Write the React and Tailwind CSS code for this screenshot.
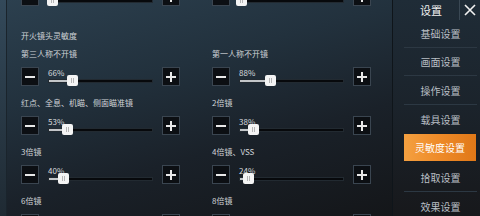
import React from "react";

const rows = [
  [
    { label: "第三人称不开镜", v: 66 },
    { label: "第一人称不开镜", v: 88 },
  ],
  [
    { label: "红点、全息、机瞄、侧面瞄准镜", v: 53 },
    { label: "2倍镜", v: 38 },
  ],
  [
    { label: "3倍镜", v: 40 },
    { label: "4倍镜、VSS", v: 24 },
  ],
  [
    { label: "6倍镜", v: 30 },
    { label: "8倍镜", v: 7 },
  ],
];

const menu = ["基础设置", "画面设置", "操作设置", "载具设置", "灵敏度设置", "拾取设置", "效果设置"];
const menuH = ["h-[28px]", "h-[28px]", "h-[29px]", "h-[29px]", "h-[29px]", "h-[29px]", "h-[29px]"];

function Btn({ plus }) {
  return (
    <div className="w-[18px] h-[19px] shrink-0 bg-[#0c0f13] border border-[#3a4550] flex items-center justify-center relative">
      <div className="w-[10px] h-[2px] bg-[#e8e8e8]" />
      {plus && <div className="absolute w-[2px] h-[10px] bg-[#e8e8e8]" />}
    </div>
  );
}

function Controls({ v, showText = true }) {
  const pos = (v / 300) * 105;
  return (
    <div className="flex h-[19px]">
      <Btn />
      <div className="ml-[9px] w-[105px] flex flex-col">
        <div className="h-[11px] text-[8px] leading-[11px] text-[#d8dbde]">{showText ? `${v}%` : ""}</div>
        <div className="relative mt-[1px] h-[4px] bg-[#07090c] border border-[#222a31]">
          <div className="absolute left-0 top-0 h-full bg-[#c3c6c9]" style={{ width: pos }} />
          <div
            className="absolute top-[-5px] w-[11px] h-[11px] rounded-[2px] bg-[#f4f4f4] flex items-center justify-center gap-[1px]"
            style={{ left: pos - 5.5 }}
          >
            <div className="w-px h-[5px] bg-[#b5b5b5]" />
            <div className="w-px h-[5px] bg-[#b5b5b5]" />
          </div>
        </div>
      </div>
      <div className="ml-[9px]">
        <Btn plus />
      </div>
    </div>
  );
}

function Cell({ label, v }) {
  return (
    <div className="flex flex-col">
      <div className="h-[12px] text-[8px] leading-[12px] text-[#d0d4d8] whitespace-nowrap">{label}</div>
      <div className="mt-[7px]">
        <Controls v={v} />
      </div>
    </div>
  );
}

export default function App() {
  return (
    <div
      className="w-[480px] h-[216px] overflow-hidden flex"
      style={{ fontFamily: '"Noto Sans CJK SC", "Noto Sans", sans-serif' }}
    >
      {/* main panel */}
      <div className="w-[392px] h-full flex bg-[linear-gradient(165deg,#2c404f_0%,#22313d_35%,#1a2129_65%,#141619_100%)]">
        <div className="w-[7px] h-full bg-[linear-gradient(180deg,#33495a,#1f2a33)] border-r border-[#1a242c]" />
        <div className="flex-1 flex flex-col pl-[14px]">
          <div className="-mt-[13px] grid grid-cols-[191px_1fr]">
            <Controls v={11} showText={false} />
            <Controls v={5} showText={false} />
          </div>
          <div className="mt-[19px] -ml-[14px] h-px bg-[#3a4b58]" />
          <div className="mt-[5px] h-[12px] text-[8px] leading-[12px] text-[#d0d4d8]">开火镜头灵敏度</div>
          <div className="mt-[6px] flex flex-col gap-[11px]">
            {rows.map((r, i) => (
              <div key={i} className="grid grid-cols-[191px_1fr]">
                <Cell {...r[0]} />
                <Cell {...r[1]} />
              </div>
            ))}
          </div>
        </div>
      </div>
      {/* sidebar */}
      <div className="w-[88px] h-full flex flex-col border-l border-[#0f151a] bg-[linear-gradient(180deg,#1f2c37_0%,#1b232b_50%,#17181b_100%)]">
        <div className="h-[21px] flex">
          <div className="flex-1 flex items-center justify-center pl-[10px] text-[11px] text-[#f0f0f0]">设置</div>
          <div className="w-[21px] h-[20px] border-l border-[#3a4854] flex items-center justify-center">
            <svg width="12" height="12" viewBox="0 0 12 12">
              <path d="M1 1 L11 11 M11 1 L1 11" stroke="#f2f2f2" strokeWidth="1.6" />
            </svg>
          </div>
        </div>
        <div className="flex flex-col ml-[11px] mr-[3px]">
          {menu.map((m, i) => {
            const active = i === 4;
            const showLine = i < menu.length - 1 && i !== 3 && i !== 4;
            return (
              <div
                key={m}
                className={`${menuH[i]} flex items-start ${showLine ? "border-b border-[#2c3843]" : ""}`}
              >
                {active ? (
                  <div className="w-[72px] h-[27px] flex items-center justify-center text-[10px] text-white bg-[linear-gradient(90deg,#f4a040_0%,#ee8a28_50%,#e07818_100%)]">
                    {m}
                  </div>
                ) : (
                  <div className="w-full h-full flex items-center justify-center text-[10px] text-[#b9bfc5]">{m}</div>
                )}
              </div>
            );
          })}
        </div>
      </div>
    </div>
  );
}
